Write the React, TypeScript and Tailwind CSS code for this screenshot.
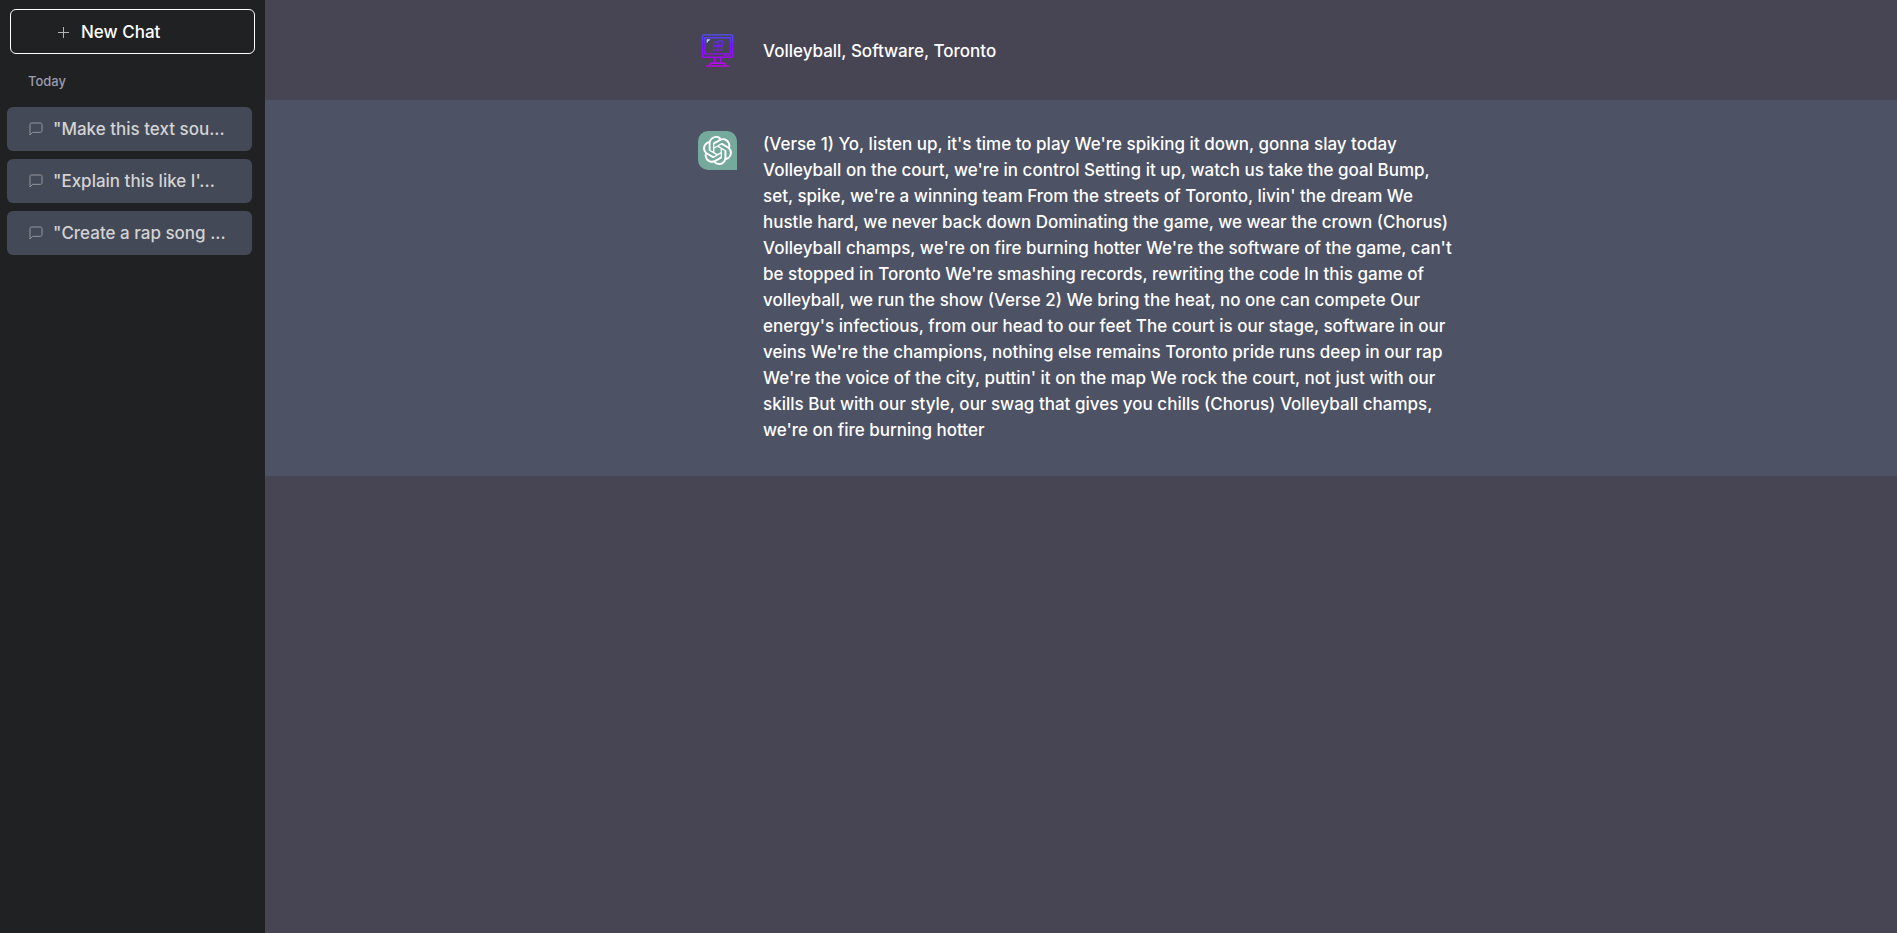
import { FiMessageSquare } from "react-icons/fi";
import { SiOpenai } from "react-icons/si";
import type { ReactNode } from "react";

const chats = ['"Make this text sou...', '"Explain this like I\'...', '"Create a rap song ...'];

const prompt = "Volleyball, Software, Toronto";

const reply =
  "(Verse 1) Yo, listen up, it's time to play We're spiking it down, gonna slay today Volleyball on the court, we're in control Setting it up, watch us take the goal Bump, set, spike, we're a winning team From the streets of Toronto, livin' the dream We hustle hard, we never back down Dominating the game, we wear the crown (Chorus) Volleyball champs, we're on fire burning hotter We're the software of the game, can't be stopped in Toronto We're smashing records, rewriting the code In this game of volleyball, we run the show (Verse 2) We bring the heat, no one can compete Our energy's infectious, from our head to our feet The court is our stage, software in our veins We're the champions, nothing else remains Toronto pride runs deep in our rap We're the voice of the city, puttin' it on the map We rock the court, not just with our skills But with our style, our swag that gives you chills (Chorus) Volleyball champs, we're on fire burning hotter";

function PlusIcon() {
  return (
    <svg viewBox="0 0 11 11" className="size-[11px]" fill="none" stroke="#b4b4b6" aria-hidden="true">
      <path d="M5.5 0v11M0 5.5h11" />
    </svg>
  );
}

function ComputerAvatar() {
  return (
    <svg viewBox="0 0 39 39" className="size-[39px] shrink-0" fill="none" aria-hidden="true">
      <defs>
        <linearGradient id="neon" gradientUnits="userSpaceOnUse" x1="0" y1="3" x2="0" y2="36">
          <stop offset="0" stopColor="#4f52ff" />
          <stop offset="0.3" stopColor="#6a1dff" />
          <stop offset="0.6" stopColor="#960aff" />
          <stop offset="1" stopColor="#cc00f5" />
        </linearGradient>
      </defs>
      <g stroke="url(#neon)" strokeWidth="1.35">
        <rect x="4.5" y="3.9" width="30.2" height="22.3" rx="1.2" />
        <path d="M6.7 22.8V6.7h25.8v16.1z" />
        <path d="M26 24.5h2M29.5 24.5h2" />
        <path d="M16.5 26.2v6.2M22.7 26.2v6.2M12 34.6v-1.4l1-.9h13.4l1 .9v1.4" />
        <path d="M8 35h23.5" />
      </g>
      <g stroke="url(#neon)" strokeWidth="1.1">
        <rect x="20" y="9.8" width="4.8" height="4.8" rx="1.4" />
        <rect x="15.6" y="11" width="4" height="3.8" rx="1.2" />
        <rect x="15.6" y="15.2" width="4" height="4" rx="1.2" />
        <rect x="19.8" y="15.2" width="4" height="4" rx="1.2" />
      </g>
      <path d="M8.7 8.3h3.8l-1.6 1.6h-.8v.9l-1.4 1.5z" fill="#a9ceff" />
    </svg>
  );
}

function AssistantAvatar() {
  return (
    <div className="flex size-[39px] shrink-0 items-center justify-center rounded-[10px] rounded-br-none bg-[#75a99b]">
      <SiOpenai className="size-[29px] text-white" aria-hidden="true" />
    </div>
  );
}

function Message({ avatar, children, className }: { avatar: ReactNode; children: ReactNode; className: string }) {
  return (
    <article className={className}>
      <div className="mx-auto flex max-w-[766px] gap-[26px]">
        {avatar}
        <p className="min-w-0 flex-1 self-center pr-2 text-[17px] leading-[26px] font-medium text-white">{children}</p>
      </div>
    </article>
  );
}

export default function App() {
  return (
    <div className="flex min-h-screen bg-[#474454] font-['Inter',sans-serif]">
      <aside className="flex w-[265px] shrink-0 flex-col bg-[#202123] pt-[9px]">
        <button
          type="button"
          className="mx-[10px] flex h-[45px] items-center gap-3 rounded-md border border-white pt-0.5 pl-[47px] text-[17px] font-medium text-white"
        >
          <PlusIcon />
          New Chat
        </button>
        <h2 className="mt-[17px] pl-7 text-[13px] leading-5 font-medium text-[#9b9baf]">Today</h2>
        <ul className="mt-4 mr-[13px] ml-[7px] flex flex-col gap-2">
          {chats.map((title) => (
            <li key={title}>
              <button
                type="button"
                className="flex h-11 w-full items-center gap-[9px] rounded-md bg-[#444957] pt-0.5 pl-[21px] text-[17px] font-medium whitespace-nowrap text-[#d3d3d3]"
              >
                <FiMessageSquare className="mb-0.5 size-4 text-[#95969c]" strokeWidth={1.5} aria-hidden="true" />
                {title}
              </button>
            </li>
          ))}
        </ul>
      </aside>
      <main className="min-w-0 flex-1">
        <Message avatar={<ComputerAvatar />} className="px-6 pt-[31px] pb-[30px]">
          {prompt}
        </Message>
        <Message avatar={<AssistantAvatar />} className="bg-[#4d5264] px-6 pt-[31px] pb-[33px]">
          {reply}
        </Message>
      </main>
    </div>
  );
}
